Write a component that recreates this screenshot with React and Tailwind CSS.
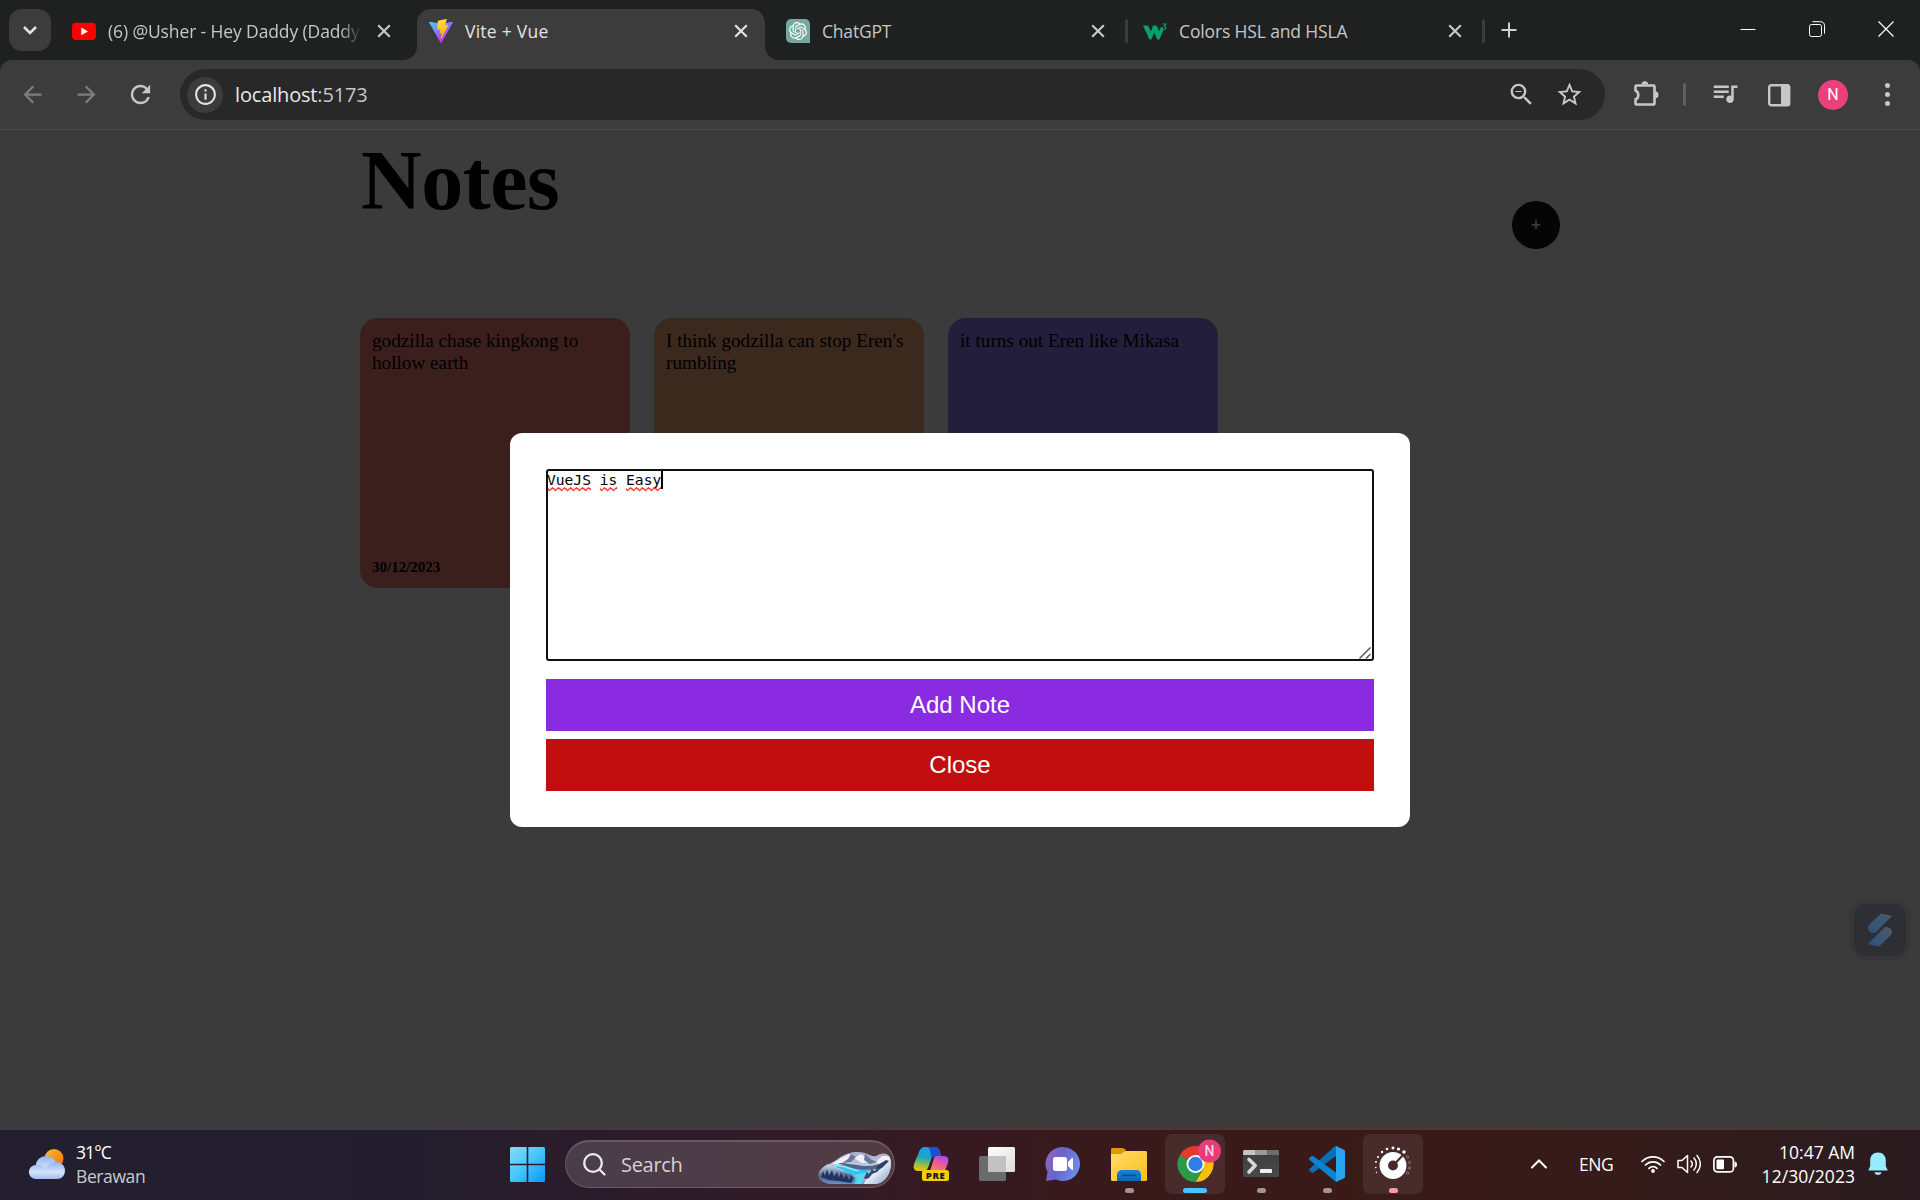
import React from "react";
import {
  MdArrowBack,
  MdArrowForward,
  MdRefresh,
  MdInfoOutline,
  MdZoomOut,
  MdStarBorder,
  MdQueueMusic,
} from "react-icons/md";
import { SiOpenai } from "react-icons/si";

const UI = "font-['Open_Sans','Noto_Sans',sans-serif]";

function CloseX() {
  return (
    <svg className="h-3.5 w-3.5 shrink-0" viewBox="0 0 14 14" fill="none" stroke="currentColor" strokeWidth="2.2">
      <path d="M1.2 1.2 12.8 12.8M12.8 1.2 1.2 12.8" />
    </svg>
  );
}

function YoutubeIcon() {
  return (
    <svg className="h-6 w-6" viewBox="0 0 24 24">
      <rect x="0" y="3.8" width="24" height="17.2" rx="4" fill="#f00" />
      <path d="M9.3 8.6 16 12.4 9.3 16.2z" fill="#fff" />
    </svg>
  );
}

function ViteIcon() {
  return (
    <svg className="h-6 w-6" viewBox="0 0 256 257">
      <defs>
        <linearGradient id="viteA" x1="0" x2=".6" y1="0" y2=".9">
          <stop offset="0" stopColor="#41d1ff" />
          <stop offset="1" stopColor="#bd34fe" />
        </linearGradient>
        <linearGradient id="viteB" x1=".4" x2=".5" y1="0" y2="1">
          <stop offset="0" stopColor="#ffea83" />
          <stop offset=".1" stopColor="#ffdd35" />
          <stop offset="1" stopColor="#ffa800" />
        </linearGradient>
      </defs>
      <path fill="url(#viteA)" d="M255.153 37.938 134.897 252.976c-2.483 4.44-8.862 4.466-11.382.048L.875 37.958c-2.746-4.814 1.371-10.646 6.827-9.67l120.385 21.517a6.537 6.537 0 0 0 2.322-.004l117.867-21.483c5.438-.991 9.574 4.796 6.877 9.62Z" />
      <path fill="url(#viteB)" d="M185.432.063 96.44 17.501a3.268 3.268 0 0 0-2.634 3.014l-5.474 92.456a3.268 3.268 0 0 0 3.997 3.378l24.777-5.718c2.318-.535 4.413 1.507 3.936 3.838l-7.361 36.047c-.495 2.426 1.782 4.5 4.151 3.78l15.304-4.649c2.372-.72 4.652 1.36 4.15 3.788l-11.698 56.621c-.732 3.542 3.979 5.473 5.943 2.437l1.313-2.028 72.516-144.72c1.215-2.423-.88-5.186-3.54-4.672l-25.505 4.922c-2.396.462-4.435-1.77-3.759-4.114l16.646-57.705c.677-2.35-1.37-4.583-3.769-4.113Z" />
    </svg>
  );
}

function ChatGptIcon() {
  return (
    <span className="grid h-6 w-6 place-items-center rounded-[5px] rounded-br-none bg-[#74aa9c] text-white">
      <SiOpenai size={18} />
    </span>
  );
}

function W3Icon() {
  return (
    <svg className="h-6 w-6" viewBox="0 0 24 24" fill="none">
      <path d="M0 6.500h5l3 6 2-6h3.600l2.800 6 1.400-4.500h1.800l.6 4L16.400 20.500h-2L11.200 13.500 8.400 20.500h-2z" fill="#04a16b" />
      <path d="M19.800 5h3l-1.500 2.100c2.100.1 1.900 3.200 0 3.200-.8 0-1.300-.3-1.600-.9" stroke="#04a16b" strokeWidth="1.200" />
    </svg>
  );
}

function Tab({ icon, title, titleClass = "" }) {
  return (
    <div className="flex h-[51px] w-[348px] items-center pr-[17px] pl-3">
      {icon}
      <span className={`mt-px ml-3 flex-1 text-[17.500px] leading-6 whitespace-nowrap ${titleClass}`}>{title}</span>
      <CloseX />
    </div>
  );
}

function Separator() {
  return <div className="mt-0.5 h-6 w-[3px] rounded-full bg-[#3c3c3c]" />;
}

function TabStrip() {
  return (
    <header className={`flex h-[60px] items-start bg-[#1f2121] pt-[9px] text-[#c7c7c7] ${UI}`}>
      <div className="ml-[9px] grid h-[42px] w-[42px] place-items-center rounded-[13px] bg-[#3c3c3c]">
        <svg className="h-3 w-4" viewBox="0 0 16 12" fill="none" stroke="#e3e3e3" strokeWidth="2.500">
          <path d="m2 3 6 6 6-6" />
        </svg>
      </div>
      <div className="-mt-1 ml-[9px]">
        <Tab
          icon={<YoutubeIcon />}
          title="(6) @Usher - Hey Daddy (Daddy"
          titleClass="tracking-[-0.120px] [mask-image:linear-gradient(90deg,#000_232px,transparent_254px)]"
        />
      </div>
      <div className="relative ml-[9px] h-[51px] w-[348px] rounded-t-[14px] bg-[#3c3c3c] text-[#e3e3e3]">
        <span className="absolute bottom-0 -left-[14px] h-[14px] w-[14px] bg-[radial-gradient(circle_at_0_0,#1f2121_13.500px,#3c3c3c_14.500px)]" />
        <span className="absolute -right-[14px] bottom-0 h-[14px] w-[14px] bg-[radial-gradient(circle_at_100%_0,#1f2121_13.500px,#3c3c3c_14.500px)]" />
        <div className="-mt-1">
          <Tab icon={<ViteIcon />} title="Vite + Vue" titleClass="tracking-[0.250px]" />
        </div>
      </div>
      <div className="-mt-1 ml-[9px]">
        <Tab icon={<ChatGptIcon />} title="ChatGPT" titleClass="tracking-[-0.200px]" />
      </div>
      <div className="mt-2 ml-[3px]">
        <Separator />
      </div>
      <div className="-mt-1 ml-[3px]">
        <Tab icon={<W3Icon />} title="Colors HSL and HSLA" titleClass="tracking-[-0.140px]" />
      </div>
      <div className="mt-2 ml-[3px]">
        <Separator />
      </div>
      <svg className="mt-[13px] ml-4 h-4 w-4" viewBox="0 0 16 16" stroke="#d0d0d0" strokeWidth="2">
        <path d="M8 .5v15M.5 8h15" />
      </svg>
      <div className="mt-[12px] mr-[26px] ml-auto flex gap-[53px] text-white">
        <svg className="h-4 w-4" viewBox="0 0 16 16" stroke="currentColor">
          <path d="M.5 8.500h15" />
        </svg>
        <svg className="h-4 w-4" viewBox="0 0 16 16" fill="none" stroke="currentColor">
          <rect x=".5" y="3.500" width="12" height="12" rx="2" />
          <path d="M3.500.7h8c2.500 0 4 1.500 4 4v8" />
        </svg>
        <svg className="h-4 w-4" viewBox="0 0 16 16" stroke="currentColor" strokeWidth="1.200">
          <path d="m.5.5 15 15M15.500.5l-15 15" />
        </svg>
      </div>
    </header>
  );
}

function Toolbar() {
  return (
    <div className="bg-[#1f2121]">
      <div className={`flex h-[70px] items-center rounded-t-[12px] border-b border-[#4b4b4b] bg-[#3c3c3c] ${UI}`}>
        <MdArrowBack size={27} className="ml-[19px] text-[#7d7d7d]" />
        <MdArrowForward size={27} className="ml-[27px] text-[#7d7d7d]" />
        <MdRefresh size={29} className="ml-[26px] text-[#c7c7c7]" />
        <div className="ml-[25px] flex h-[51px] w-[1425px] items-center rounded-full bg-[#282828] pr-[21px] pl-[7px]">
          <span className="grid h-9 w-9 place-items-center rounded-full bg-[#3c3c3c]">
            <MdInfoOutline size={25} className="text-[#e3e3e3]" />
          </span>
          <span className="ml-3 flex-1 text-[20px] tracking-[-0.160px] text-[#e8e8e8]">
            localhost<span className="text-[#c7c7c7]">:5173</span>
          </span>
          <MdZoomOut size={29} className="text-[#c7c7c7]" />
          <MdStarBorder size={29} className="ml-[19px] text-[#c7c7c7]" />
        </div>
        <svg className="-mt-px ml-[27px] h-7 w-7" viewBox="0 0 28 28" fill="none">
          <path d="M4.500 5.500h17a1 1 0 0 1 1 1v17a1 1 0 0 1-1 1h-17a1 1 0 0 1-1-1v-4.200c3.700-.8 3.700-7.800 0-8.600V6.500a1 1 0 0 1 1-1z" stroke="#c7c7c7" strokeWidth="2.600" strokeLinejoin="round" />
          <path d="M9.500 4.500a3.300 3.300 0 0 1 6.600 0zM23 11.300a3.500 3.500 0 0 1 0 7z" fill="#c7c7c7" />
        </svg>
        <div className="ml-[23px] h-[23px] w-[3px] rounded-full bg-[#5f5f5f]" />
        <MdQueueMusic size={30} className="-mt-1 ml-[24px] text-[#c7c7c7]" />
        <svg className="ml-[27px] h-6 w-6" viewBox="0 0 24 24">
          <rect x="2.200" y="2.200" width="20" height="20" rx="2" fill="none" stroke="#c7c7c7" strokeWidth="2.400" />
          <path d="M14 2h8v20h-8z" fill="#c7c7c7" />
        </svg>
        <span className="ml-[27px] grid h-[30px] w-[30px] place-items-center rounded-full bg-[#ec407a] font-['Roboto',sans-serif] text-[16px] text-white">
          N
        </span>
        <div className="ml-[37px] flex flex-col gap-[4px]">
          <i className="h-[5px] w-[5px] rounded-full bg-[#c7c7c7]" />
          <i className="h-[5px] w-[5px] rounded-full bg-[#c7c7c7]" />
          <i className="h-[5px] w-[5px] rounded-full bg-[#c7c7c7]" />
        </div>
      </div>
    </div>
  );
}

const notes = [
  { text: "godzilla chase kingkong to hollow earth", color: "bg-[#3b1f1d]", date: "30/12/2023" },
  { text: "I think godzilla can stop Eren's rumbling", color: "bg-[#3b291e]", date: "30/12/2023" },
  { text: "it turns out Eren like Mikasa", color: "bg-[#231e3b]", date: "30/12/2023" },
];

function Squiggle({ width, className }) {
  return (
    <svg className={`absolute top-[16px] h-[5px] ${className}`} width={width} height="5">
      <defs>
        <pattern id={`wave${width}`} width="6" height="5" patternUnits="userSpaceOnUse">
          <path d="M-1.500 0 1.500 3.600 4.500 .8 7.500 3.600" fill="none" stroke="#f33" strokeWidth="1.300" />
        </pattern>
      </defs>
      <rect width={width} height="5" fill={`url(#wave${width})`} />
    </svg>
  );
}

function NoteDialog() {
  return (
    <div className="absolute inset-0 flex items-start justify-center pt-[303px]">
      <section className="flex h-[394px] w-[900px] flex-col rounded-[12px] bg-white p-9">
        <div className="relative h-[192px] rounded-[3px] border-2 border-[#101010] font-['DejaVu_Sans_Mono',monospace] text-[14.600px] text-black">
          <div className="relative -ml-px flex w-fit leading-[17px] whitespace-pre">
            VueJS is Easy
            <i className="-mr-px h-[18px] w-[2px] bg-black" />
            <Squiggle width={43} className="left-px" />
            <Squiggle width={17} className="left-[53px]" />
            <Squiggle width={35} className="left-[79px]" />
          </div>
          <svg className="absolute right-px bottom-0 h-3 w-3" viewBox="0 0 12 12" stroke="#555" strokeWidth="1.500">
            <path d="M.5 11.500 11.500.5M7 11.500 11.500 7" />
          </svg>
        </div>
        <button className="mt-[18px] h-[52px] w-full bg-[#8a2be2] font-['Liberation_Sans',Arial,sans-serif] text-[24px] text-white">Add Note</button>
        <button className="mt-2 h-[52px] w-full bg-[#c10f0f] font-['Liberation_Sans',Arial,sans-serif] text-[24px] text-white">Close</button>
      </section>
    </div>
  );
}

function NotesPage() {
  return (
    <main className="relative h-[998px] overflow-hidden bg-[#3b3b3b] font-['Liberation_Serif',serif] text-black">
      <div className="mx-auto w-[1200px]">
        <div className="flex h-[188px] justify-between">
          <h1 className="mt-[3px] ml-px text-[84px] leading-[96px] font-bold tracking-[-0.500px]">Notes</h1>
          <button className="mt-[71px] h-12 w-12 rounded-full bg-[#050505] pb-px font-['Liberation_Sans',sans-serif] text-[16px] font-bold text-[#3b3b3b]">+</button>
        </div>
        <div className="flex gap-6">
          {notes.map((n) => (
            <article key={n.text} className={`flex h-[270px] w-[270px] flex-col justify-between rounded-[18px] p-3 text-[19.200px] leading-[22px] ${n.color}`}>
              <p>{n.text}</p>
              <time className="text-[15px] leading-[18px] font-bold">{n.date}</time>
            </article>
          ))}
        </div>
      </div>
      <NoteDialog />
      <aside className="absolute top-[770px] left-[1850px] grid h-[60px] w-[60px] place-items-center rounded-[16px] border-4 border-[#37373b] bg-[#2e2f35]">
        <svg className="h-[34px] w-[26px]" viewBox="0 0 26 34">
          <defs>
            <linearGradient id="sw" x1="1" y1="0" x2="0" y2="1">
              <stop offset="0" stopColor="#4d5a68" />
              <stop offset="1" stopColor="#2b5280" />
            </linearGradient>
          </defs>
          <path d="M14 .5 25 3 8 20C4 20 1 18 1 15c0-1.500.7-2.600 1.500-3.500z" fill="url(#sw)" />
          <path d="m12 33.500-11-2.500 17-17c4 0 7 2 7 5 0 1.500-.7 2.600-1.500 3.500z" fill="url(#sw)" />
        </svg>
      </aside>
    </main>
  );
}

function WeatherIcon() {
  return (
    <svg className="h-[30px] w-9" viewBox="0 0 36 30">
      <defs>
        <linearGradient id="sun" x1="0" y1="0" x2="1" y2="1">
          <stop offset="0" stopColor="#f4c430" />
          <stop offset="1" stopColor="#f26a10" />
        </linearGradient>
        <linearGradient id="cloud" x1="0" y1="0" x2="0" y2="1">
          <stop offset="0" stopColor="#8fb4f0" />
          <stop offset=".6" stopColor="#d5e3fa" />
          <stop offset="1" stopColor="#9cbcf2" />
        </linearGradient>
      </defs>
      <circle cx="25" cy="9.500" r="9.500" fill="url(#sun)" />
      <circle cx="17" cy="17.500" r="10.500" fill="url(#cloud)" />
      <path d="M7 16c4-1 8 1 10 4 1-4 5-7 10-7 5 0 9 3.500 9 8.500S32.500 30 28 30H7c-4 0-7-3-7-7s3-7 7-7z" fill="url(#cloud)" />
    </svg>
  );
}

function SearchArt() {
  return (
    <svg className="h-8 w-[73px]" viewBox="0 0 73 32">
      <defs>
        <clipPath id="artClip">
          <path d="M1 25C-.5 20 4 15.500 9 12.500 17 11 22 3 32 1c3-1.500 12-1.500 16 .5 5 2 8 4 12 1.500 4-2 8-2 10 0 3 3 3.500 8 2.500 13C71 24 66 32 56 32H15C8 32 2 29 1 25z" />
        </clipPath>
        <linearGradient id="artSky" x1="0" y1="0" x2="0" y2="1">
          <stop offset="0" stopColor="#a7aec6" />
          <stop offset=".5" stopColor="#c5cfe2" />
          <stop offset="1" stopColor="#7f9bc4" />
        </linearGradient>
        <linearGradient id="artWood" x1="0" y1="0" x2="0" y2="1">
          <stop offset="0" stopColor="#c0cce2" />
          <stop offset=".6" stopColor="#4a6290" />
          <stop offset="1" stopColor="#6b8fc6" />
        </linearGradient>
        <linearGradient id="artSlope" x1="0" y1="0" x2="1" y2="1">
          <stop offset="0" stopColor="#5d7aa6" />
          <stop offset=".5" stopColor="#e3eaf5" />
          <stop offset="1" stopColor="#7f9ccb" />
        </linearGradient>
      </defs>
      <g clipPath="url(#artClip)">
        <path d="M0 0h73v32H0z" fill="url(#artSky)" />
        <path d="m14 12 9-6 8-4 5 3-4 4-9 4zM36 6l7-4 6 4 4 4-9 1zM58 10l6-6 8 0v7l-8 4z" fill="#eef1f7" />
        <path d="m33 2 5 3-5 5-9 1 6-4zM47 2l7 6 5 2-7 2-6-4z" fill="#6a7696" />
        <path d="M20 11c9 0 16 2 26 3 8 .5 15-1 22-5l-4 6-14 4-14-1z" fill="#4e6488" />
        <path d="M14 13c8-1.500 14 .5 21 3 6 2 12 2 18 1l-7 6-5 9h-6l2-8z" fill="#35c3ea" />
        <path d="M16 13.500c9-.5 16 4 25 5.500" stroke="#a5ecfa" strokeWidth="1.200" fill="none" />
        <path d="m0 19 8-5 8 1 8 4 9 3 4 4-1 6H0z" fill="url(#artWood)" />
        <path d="m3 25 2-6 2 5 2-7 2 7 3-6 2 7 3-5 2 6 2-6 3 7 2-5 3 6 3-5 1 5-2 3-12-2-10-1z" fill="#22335c" />
        <path d="M37 23c4-1.500 8-2 12-2l-3 4-2 7h-7l2-4z" fill="#54d8f0" />
        <path d="m46 32 3-8 6-5 10-5 8-8v26z" fill="url(#artSlope)" />
        <path d="m46 26 3-6 2 2 3-5 2 2 8-4-5 5-5 2-3 4-3 1z" fill="#33476f" />
        <path d="m60 13 8-5 3 1-7 7-7 2z" fill="#2f4266" />
      </g>
    </svg>
  );
}

function CopilotIcon() {
  return (
    <svg className="h-9 w-9" viewBox="0 0 36 36">
      <defs>
        <linearGradient id="cpA" x1=".3" y1="0" x2=".1" y2="1">
          <stop offset="0" stopColor="#1f9cf0" />
          <stop offset=".4" stopColor="#1ea5c0" />
          <stop offset=".7" stopColor="#8fc04a" />
          <stop offset="1" stopColor="#ffc400" />
        </linearGradient>
        <linearGradient id="cpB" x1=".8" y1="0" x2=".2" y2="1">
          <stop offset="0" stopColor="#a44cf2" />
          <stop offset=".5" stopColor="#f05a92" />
          <stop offset="1" stopColor="#ff8a50" />
        </linearGradient>
      </defs>
      <path d="M12 1h10c3 0 4 2 5 5l1 4h-6c-2 0-3 1-4 4l-3 8c-1 2-2 3-5 3H5c-4 0-5-3-4-7L6 6c1-3 3-5 6-5z" fill="url(#cpA)" />
      <path d="M17 1h5c3 0 4 2 5 5l1 4h-6c-2 0-3 .5-4 3 0-5 0-9-3-12z" fill="#1e4fd0" />
      <path d="M24 10h7c4 0 5 3 4 7l-3 8H13c3 0 4-2 5-5l2-7c1-2 2-3 4-3z" fill="url(#cpB)" />
      <path d="m18.500 13 2.500-1-4 13h-5c2.500-1 3.500-3 4-5z" fill="#351b24" />
      <rect x="9" y="24" width="27" height="11" rx="2.500" fill="#f8cc12" />
      <text x="12.800" y="33" fontFamily="'Open Sans', sans-serif" fontWeight="800" fontSize="9.500" letterSpacing=".6" fill="#1a1a1a">PRE</text>
    </svg>
  );
}

function TaskViewIcon() {
  return (
    <svg className="h-9 w-9" viewBox="0 0 36 36">
      <defs>
        <linearGradient id="tvG" x1="0" y1="0" x2="1" y2="1">
          <stop offset="0" stopColor="#fff" />
          <stop offset="1" stopColor="#dcdcdc" />
        </linearGradient>
      </defs>
      <rect x="9" y="1" width="27" height="25" rx="1.500" fill="url(#tvG)" />
      <rect x="0" y="10" width="27" height="25" rx="1.500" fill="#6b6b6b" />
      <path d="M9 10h18v16H10.500A1.500 1.500 0 0 1 9 24.500z" fill="#c2c2c2" />
    </svg>
  );
}

function ChatIcon() {
  return (
    <svg className="h-9 w-9" viewBox="0 0 36 36">
      <defs>
        <linearGradient id="chG" x1="0" y1="0" x2="1" y2=".4">
          <stop offset="0" stopColor="#9467b4" />
          <stop offset=".5" stopColor="#6a63cc" />
          <stop offset="1" stopColor="#6b8be8" />
        </linearGradient>
      </defs>
      <path d="M18 1a17 17 0 1 1-7 32.500L1 35l1.500-9A17 17 0 0 1 18 1z" fill="url(#chG)" />
      <rect x="8" y="11" width="14" height="14" rx="2.500" fill="#fff" />
      <path d="m23.500 16 4-4v12l-4-4z" fill="#fff" stroke="#fff" strokeLinejoin="round" />
    </svg>
  );
}

function ExplorerIcon() {
  return (
    <svg className="h-9 w-9" viewBox="0 0 36 36">
      <defs>
        <linearGradient id="exA" x1="0" y1="0" x2="1" y2="1">
          <stop offset="0" stopColor="#ffdc6a" />
          <stop offset="1" stopColor="#fdbd1e" />
        </linearGradient>
        <linearGradient id="exB" x1="0" y1="0" x2="0" y2="1">
          <stop offset="0" stopColor="#1683d8" />
          <stop offset="1" stopColor="#0d66b4" />
        </linearGradient>
      </defs>
      <path d="M0 3.500C0 2.500.7 2 1.500 2H11c1 0 2 .6 4 2l-4 5H0z" fill="#dd9a00" />
      <path d="M0 8h9c3 0 3-3 6-3h19.500c1 0 1.500.7 1.500 1.500v27c0 .8-.5 1.500-1.500 1.500h-33C.5 35 0 34.300 0 33.500z" fill="url(#exA)" />
      <path d="M6 35v-6c0-3 2-5 5-5h14c3 0 5 2 5 5v6z" fill="url(#exB)" />
      <path d="M11 29.300h14" stroke="#0a4b8c" strokeWidth="1.500" />
    </svg>
  );
}

function ChromeIcon() {
  return (
    <svg className="h-[46px] w-[46px]" viewBox="0 0 46 46">
      <path d="M18.500 27 2.900 18A18 18 0 0 1 34.100 18H18.500z" fill="#e33b2e" />
      <path d="M18.500 18h15.600a18 18 0 0 1-15.600 27l7.800-13.500z" fill="#fbbc0a" />
      <path d="M18.500 27v18A18 18 0 0 1 2.900 18l7.800 13.500h15.600L18.500 45A18 18 0 0 1 2.900 18z" fill="#2c9a48" />
      <circle cx="18.500" cy="27" r="9" fill="#fff" />
      <circle cx="18.500" cy="27" r="7.200" fill="#2f7de9" />
      <circle cx="32.500" cy="14" r="11.500" fill="#e93c78" />
      <text x="32.500" y="19" textAnchor="middle" fontFamily="Roboto, sans-serif" fontWeight="500" fontSize="14" fill="#ffd3e0">N</text>
    </svg>
  );
}

function TerminalIcon() {
  return (
    <svg className="h-9 w-9" viewBox="0 0 36 36">
      <defs>
        <linearGradient id="tmG" x1="0" y1="0" x2="0" y2="1">
          <stop offset="0" stopColor="#3c3c3c" />
          <stop offset="1" stopColor="#4a4a4a" />
        </linearGradient>
      </defs>
      <rect y="4" width="36" height="27" rx="1.500" fill="url(#tmG)" />
      <path d="M1.500 4H12v5H0V5.500A1.500 1.500 0 0 1 1.500 4z" fill="#c4c4c4" />
      <path d="M12 4h12v5H12z" fill="#9a9a9a" />
      <path d="M24 4h10.500A1.500 1.500 0 0 1 36 5.500V9H24z" fill="#6c6c6c" />
      <path d="m6 13.500 6.200 6L6 26" fill="none" stroke="#d8d8d8" strokeWidth="3.600" strokeLinecap="round" strokeLinejoin="round" />
      <rect x="17" y="23" width="12" height="4" rx="1" fill="#f0f0f0" />
    </svg>
  );
}

function CodeIcon() {
  return (
    <svg className="h-9 w-9" viewBox="0 0 36 36">
      <path d="M27 0v10L4.300 26.400a2 2 0 0 1-2.200-.1L.6 24.900a1.500 1.500 0 0 1 0-2.200L25.500.5z" fill="#0a6fb4" />
      <path d="M.6 11.700 2.100 10.300a2 2 0 0 1 2.200-.1L27 26.500V36L.6 13.900a1.500 1.500 0 0 1 0-2.200z" fill="#0a83d2" />
      <path d="M27 0 34.600 3.600c.8.4 1.400 1.200 1.400 2.100v24.700c0 .9-.6 1.700-1.400 2.100L27 36z" fill="#27a3f0" />
    </svg>
  );
}

const dialDots = [
  [1.5, 26.5, 0], [0.8, 21.5, 0], [1, 16, 0], [3, 11, 0], [7, 6, 0], [12, 3, 0], [18, 2, 0], [23.5, 3, 0], [29, 6, 0],
  [32.5, 11, 1], [34.5, 16.5, 1], [34.5, 22, 1], [32.5, 27, 1],
];

function DialIcon() {
  return (
    <svg className="h-9 w-9" viewBox="0 0 36 36">
      <circle cx="18" cy="19.500" r="9.200" fill="none" stroke="#fff" strokeWidth="8.500" />
      <path d="m20.500 17 7-7.500" stroke="#46272a" strokeWidth="2" />
      {dialDots.map(([x, y, off], i) =>
        off ? (
          <circle key={i} cx={x} cy={y} r="1.200" fill="none" stroke="#8e7878" strokeWidth=".9" />
        ) : (
          <circle key={i} cx={x} cy={y} r={0.7 + i * 0.13} fill="#fff" />
        )
      )}
    </svg>
  );
}

function TaskButton({ children, active, indicator }) {
  return (
    <div className={`relative grid h-[60px] w-[60px] place-items-center rounded-[7px] ${active ? "bg-white/8" : ""}`}>
      {children}
      {indicator && <i className={`absolute bottom-px h-[5px] rounded-full ${indicator}`} />}
    </div>
  );
}

function Taskbar() {
  return (
    <footer className={`flex h-[72px] items-center border-t-2 border-white/12 bg-[linear-gradient(90deg,#231f2e_0%,#231e2d_22%,#2b1c2b_30%,#321b26_42%,#371a20_52%,#3a1a18_64%,#371b18_80%,#301c1d_92%,#2a1b20_100%)] bg-origin-border pb-0.5 text-white ${UI}`}>
      <div className="flex w-[468px] shrink-0 items-center pl-[29px]">
        <WeatherIcon />
        <div className="-mt-px ml-[11px] text-[17.500px] leading-6">
          <div className="tracking-[-0.900px]">31°C</div>
          <div className="tracking-[-0.400px] text-[#cbc8cd]">Berawan</div>
        </div>
      </div>
      <svg className="ml-[42px] h-[35px] w-[35px] shrink-0" viewBox="0 0 35 35">
        <defs>
          <linearGradient id="winG" x1="0" y1="0" x2="1" y2="1">
            <stop offset="0" stopColor="#86dcff" />
            <stop offset=".5" stopColor="#45c5fc" />
            <stop offset="1" stopColor="#0a96fa" />
          </linearGradient>
        </defs>
        <path d="M1.500 0h15.200v16.700H0V1.500A1.500 1.500 0 0 1 1.500 0zM18.300 0h15.200A1.500 1.500 0 0 1 35 1.500v15.200H18.300zM0 18.300h16.700V35H1.500A1.500 1.500 0 0 1 0 33.500zM18.300 18.300H35v15.200a1.500 1.500 0 0 1-1.500 1.500H18.300z" fill="url(#winG)" />
      </svg>
      <div className="ml-5 flex h-12 w-[330px] shrink-0 items-center rounded-full border border-t-2 border-white/15 bg-white/15 pl-[17px]">
        <svg className="h-[23px] w-[23px]" viewBox="0 0 23 23" fill="none" stroke="#ececec" strokeWidth="2.300" strokeLinecap="round">
          <circle cx="10" cy="10" r="8.800" />
          <path d="m16.500 16.500 5 5" />
        </svg>
        <span className="ml-[15px] flex-1 text-[20px] tracking-[-0.300px] text-[#d6d0d4]">Search</span>
        <div className="mt-1.5 mr-[3px]">
          <SearchArt />
        </div>
      </div>
      <div className="ml-[6px] flex shrink-0 gap-[6px]">
        <TaskButton><CopilotIcon /></TaskButton>
        <TaskButton><TaskViewIcon /></TaskButton>
        <TaskButton><ChatIcon /></TaskButton>
        <TaskButton indicator="w-[9px] bg-[#a39596]"><ExplorerIcon /></TaskButton>
        <TaskButton active indicator="w-6 bg-[#4cc2ff]">
          <div className="-mt-2 ml-[9px]"><ChromeIcon /></div>
        </TaskButton>
        <TaskButton indicator="w-[9px] bg-[#a39596]"><TerminalIcon /></TaskButton>
        <TaskButton indicator="w-[9px] bg-[#a39596]"><CodeIcon /></TaskButton>
        <TaskButton active indicator="w-[9px] bg-[#ff99a4]"><DialIcon /></TaskButton>
      </div>
      <div className="mr-8 ml-auto flex items-center">
        <svg className="h-4 w-4" viewBox="0 0 16 16" fill="none" stroke="#fff" strokeWidth="2" strokeLinecap="round">
          <path d="m1 11.500 7-7 7 7" />
        </svg>
        <span className="ml-8 w-[35px] text-[17.500px] tracking-[-0.500px]">ENG</span>
        <svg className="ml-[27px] h-5 w-6" viewBox="0 0 24 20" fill="none" stroke="#fff" strokeWidth="1.700" strokeLinecap="round">
          <path d="M1 7.500a15.500 15.500 0 0 1 22 0M4.500 11a10.500 10.500 0 0 1 15 0M8 14.300a5.800 5.800 0 0 1 8 0" />
          <circle cx="12" cy="17" r="1.900" fill="#fff" stroke="none" />
        </svg>
        <svg className="ml-3 h-6 w-6" viewBox="0 0 24 24" fill="none" stroke="#fff" strokeWidth="1.500" strokeLinecap="round" strokeLinejoin="round">
          <path d="M1 8.500h4L10.500 3.500v17L5 15.500H1zM14 9a4.500 4.500 0 0 1 0 6M17 6a9 9 0 0 1 0 12M20 3.500a12.500 12.500 0 0 1 0 17" />
        </svg>
        <svg className="ml-3 h-[17px] w-6" viewBox="0 0 24 17" fill="none">
          <rect x=".9" y=".9" width="19.500" height="15" rx="3.500" stroke="#fff" strokeWidth="1.700" />
          <rect x="3.500" y="3.500" width="7.500" height="9.800" rx="1" fill="#fff" />
          <path d="M21.500 5.500c1.500 0 2.500 1 2.500 3s-1 3-2.500 3z" fill="#fff" />
        </svg>
        <div className="-mt-px ml-5 flex w-[98px] flex-col items-end text-[17.500px] leading-6 whitespace-nowrap">
          <span>10:47 AM</span>
          <span className="tracking-[0.050px]">12/30/2023</span>
        </div>
        <svg className="ml-[13px] h-6 w-5" viewBox="0 0 20 24" fill="#99ebff">
          <path d="M10 .5c4.700 0 7.800 3.300 7.800 7.800v6l2 4.200H.2l2-4.200v-6C2.200 3.800 5.300.5 10 .5zM6.500 20.300h7a3.600 3.600 0 0 1-7 0z" />
        </svg>
      </div>
    </footer>
  );
}

export default function App() {
  return (
    <div className="h-[1200px] w-[1920px] overflow-hidden bg-[#3b3b3b]">
      <TabStrip />
      <Toolbar />
      <NotesPage />
      <Taskbar />
    </div>
  );
}
